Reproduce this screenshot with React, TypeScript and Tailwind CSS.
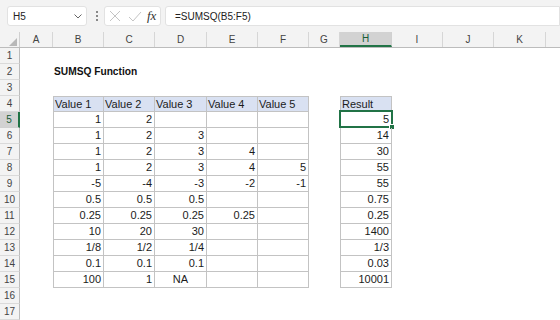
import React from "react";

type Col = { k: string; w: string };
const COLS: Col[] = [
  { k: "A", w: "w-[33px]" },
  { k: "B", w: "w-[51px]" },
  { k: "C", w: "w-[51px]" },
  { k: "D", w: "w-[52px]" },
  { k: "E", w: "w-[51px]" },
  { k: "F", w: "w-[51px]" },
  { k: "G", w: "w-[31px]" },
  { k: "H", w: "w-[52px]" },
  { k: "I", w: "w-[51px]" },
  { k: "J", w: "w-[51px]" },
  { k: "K", w: "w-[52px]" },
];

const DATA: Record<string, string[]> = {
  B: ["1", "1", "1", "1", "-5", "0.5", "0.25", "10", "1/8", "0.1", "100"],
  C: ["2", "2", "2", "2", "-4", "0.5", "0.25", "20", "1/2", "0.1", "1"],
  D: ["", "3", "3", "3", "-3", "0.5", "0.25", "30", "1/4", "0.1", "NA"],
  E: ["", "", "4", "4", "-2", "", "0.25", "", "", "", ""],
  F: ["", "", "", "5", "-1", "", "", "", "", "", ""],
  H: ["5", "14", "30", "55", "55", "0.75", "0.25", "1400", "1/3", "0.03", "10001"],
};
const HEAD: Record<string, string> = {
  B: "Value 1",
  C: "Value 2",
  D: "Value 3",
  E: "Value 4",
  F: "Value 5",
  H: "Result",
};

const TABLE_COLS = ["B", "C", "D", "E", "F", "H"];

function Cell({ r, c }: { r: number; c: Col }) {
  const inTable = TABLE_COLS.includes(c.k) && r >= 4 && r <= 15;
  let cls = `${c.w} shrink-0 h-full relative text-[11px] leading-[15px] text-[#1b1b1b] whitespace-nowrap`;
  let content: React.ReactNode = null;
  if (r === 2 && c.k === "B") {
    content = (
      <span className="absolute left-[1px] top-0 font-bold text-[10.2px] leading-[16px] text-[#111]">
        SUMSQ Function
      </span>
    );
  }
  if (inTable) {
    cls += " border-r border-b border-[#c3c3c3]";
    if (c.k === "B" || c.k === "H") cls += " border-l";
    if (r === 4) cls += " border-t bg-[#d9e1f2]";
    if (r === 4) {
      content = <div className="pl-[1px] text-left">{HEAD[c.k]}</div>;
    } else {
      const v = DATA[c.k][r - 5];
      if (v === "NA") content = <div className="text-center">{v}</div>;
      else content = <div className="pr-[2px] text-right">{v}</div>;
    }
  }
  return (
    <div className={cls}>
      {content}
      {r === 5 && c.k === "H" && (
        <div className="absolute left-[-2px] top-[-2px] w-[54px] h-[18px] border-2 border-[#217346] pointer-events-none">
          <div className="absolute right-[-4px] bottom-[-4px] w-[6px] h-[6px] bg-[#217346] border border-white" />
        </div>
      )}
    </div>
  );
}

function Row({ r }: { r: number }) {
  const sel = r === 5;
  return (
    <div className="flex h-[16px]">
      <div
        className={
          sel
            ? "w-[20px] shrink-0 h-full bg-[#d2d2d2] border-b border-[#d0d0d0] border-r-2 border-r-[#217346] text-center text-[10px] leading-[15px] text-[#185c37]"
            : "w-[20px] shrink-0 h-full bg-[#f3f3f3] border-b border-[#dadada] border-r border-r-[#bcbcbc] text-center text-[10px] leading-[15px] text-[#444]"
        }
      >
        {r}
      </div>
      {COLS.map((c) => (
        <Cell key={c.k} r={r} c={c} />
      ))}
      <div className="flex-1" />
    </div>
  );
}

export default function App() {
  const rows = Array.from({ length: 17 }, (_, i) => i + 1);
  return (
    <div
      className="w-[560px] h-[320px] overflow-hidden bg-white"
      style={{ fontFamily: '"Liberation Sans", Arial, sans-serif' }}
    >
      {/* formula bar */}
      <div className="h-[32px] bg-[#f3f3f3] flex items-start pt-[6px]">
        <div className="ml-[7px] w-[80px] h-[20px] bg-white rounded-[3px] border border-[#e2e2e2] flex items-center justify-between pl-[5px] pr-[4px]">
          <span className="text-[10px] text-[#222]">H5</span>
          <svg width="8" height="5" viewBox="0 0 8 5">
            <path d="M0.5 0.5 L4 4 L7.5 0.5" stroke="#666" strokeWidth="1" fill="none" />
          </svg>
        </div>
        <div className="ml-[8px] w-[3px] h-[20px] flex flex-col items-center justify-center gap-[2px]">
          <div className="w-[2px] h-[2px] bg-[#888]" />
          <div className="w-[2px] h-[2px] bg-[#888]" />
          <div className="w-[2px] h-[2px] bg-[#888]" />
        </div>
        <div className="ml-[6px] w-[57px] h-[20px] bg-white rounded-[3px] border border-[#e2e2e2] flex items-center pl-[4px]">
          <svg width="12" height="12" viewBox="0 0 12 12">
            <path d="M1 1 L11 11 M11 1 L1 11" stroke="#c4c4c4" strokeWidth="1" fill="none" />
          </svg>
          <svg width="14" height="12" viewBox="0 0 14 12" className="ml-[7px]">
            <path d="M1 7 L5 11 L13 2" stroke="#c4c4c4" strokeWidth="1" fill="none" />
          </svg>
          <span
            className="ml-[5px] italic text-[13px] leading-[14px] text-[#333]"
            style={{ fontFamily: '"Liberation Serif", "Times New Roman", serif' }}
          >
            fx
          </span>
        </div>
        <div className="ml-[4px] flex-1 h-[20px] bg-white border border-[#e2e2e2] rounded-l-[3px] flex items-center pl-[9px]">
          <span className="text-[10px] text-[#222]">=SUMSQ(B5:F5)</span>
        </div>
      </div>
      {/* column headers */}
      <div className="flex h-[16px] bg-[#f3f3f3] border-b border-[#bcbcbc]">
        <div className="w-[20px] shrink-0 h-full border-r border-[#d0d0d0]">
          <svg width="20" height="15" viewBox="0 0 20 15">
            <polygon points="17,6 17,14 9,14" fill="#b8b8b8" />
          </svg>
        </div>
        {COLS.map((c) =>
          c.k === "H" ? (
            <div
              key={c.k}
              className={`${c.w} shrink-0 h-full bg-[#d2d2d2] border-b-2 border-[#217346] border-r border-r-[#d0d0d0] text-center text-[10px] leading-[14px] text-[#185c37]`}
            >
              {c.k}
            </div>
          ) : (
            <div
              key={c.k}
              className={`${c.w} shrink-0 h-full border-r border-[#d6d6d6] text-center text-[10px] leading-[15px] text-[#444]`}
            >
              {c.k}
            </div>
          )
        )}
        <div className="flex-1" />
      </div>
      {rows.map((r) => (
        <Row key={r} r={r} />
      ))}
    </div>
  );
}
